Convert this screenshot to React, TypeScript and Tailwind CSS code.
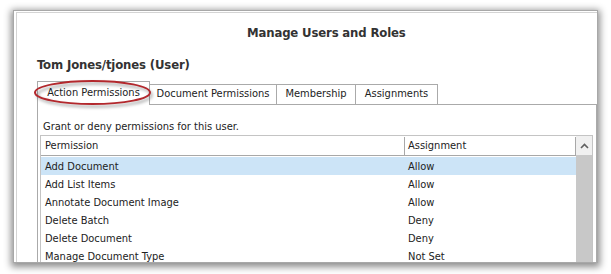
import React from "react";

const rows = [
  ["Add Document", "Allow"],
  ["Add List Items", "Allow"],
  ["Annotate Document Image", "Allow"],
  ["Delete Batch", "Deny"],
  ["Delete Document", "Deny"],
  ["Manage Document Type", "Not Set"],
];

export default function App() {
  return (
    <div className="relative w-[611px] h-[274px] bg-white pt-[10px] pl-[13px] font-['DejaVu_Sans_Condensed','DejaVu_Sans',sans-serif] text-[11px] text-[#222]">
      <div className="w-[585px] h-[253px] border border-[#a8a8a8] bg-white overflow-hidden shadow-[0_2px_7px_2px_rgba(0,0,0,0.45)]">
        <div className="ml-[2px] mt-[1px] h-full border-l border-t border-[#d4d4d4]">
          <div className="pt-[12px] pl-[230px] h-[28px] leading-[16px] text-[13px] font-bold text-[#333] tracking-[-0.15px]">
            Manage Users and Roles
          </div>
          <div className="mt-[16px] pl-[20px] leading-[16px] text-[13px] font-bold text-[#333] tracking-[-0.15px]">
            Tom Jones/tjones (User)
          </div>
          <div className="mt-[8px] pl-[20px]">
            <div className="flex items-end h-[23px]">
              <div className="relative z-10 -mb-px h-[24px] w-[113px] border-l border-r border-t border-[#aaa] bg-white flex items-center justify-center pb-[1px]">
                Action Permissions
              </div>
              <div className="h-[20px] w-[127px] border-r border-t border-[#aaa] bg-white flex items-center justify-center">
                Document Permissions
              </div>
              <div className="h-[20px] w-[79px] border-r border-t border-[#aaa] bg-white flex items-center justify-center">
                Membership
              </div>
              <div className="h-[20px] w-[82px] border-r border-t border-[#aaa] bg-white flex items-center justify-center">
                Assignments
              </div>
            </div>
            <div className="w-[560px] h-[200px] border-l border-r border-t border-[#aaa]">
              <div className="pt-[15px] pl-[5px] leading-[14px]">Grant or deny permissions for this user.</div>
              <div className="mt-[1px] ml-[2px] w-[553px] h-[200px] border-l border-r border-t border-[#c4c4c4] flex">
                <div className="w-[535px]">
                  <div className="flex h-[20px] border-b border-[#a8a8a8] pt-[1px]">
                    <div className="w-[364px] border-r border-[#a8a8a8] pl-[4px] flex items-center">Permission</div>
                    <div className="w-[171px] border-r border-[#a8a8a8] pl-[3px] flex items-center">Assignment</div>
                  </div>
                  <div className="pt-[1px]">
                    {rows.map(([p, a], i) => (
                      <div key={p} className={"flex h-[18px] items-center pt-[2px] " + (i === 0 ? "bg-[#cce4f7]" : "")}>
                        <div className="w-[364px] pl-[4px]">{p}</div>
                        <div className="pl-[3px]">{a}</div>
                      </div>
                    ))}
                  </div>
                </div>
                <div className="w-[16px] flex flex-col">
                  <div className="h-[19px] bg-[#f0f0f0] flex items-center justify-center">
                    <svg width="9" height="6" viewBox="0 0 9 6">
                      <path d="M1 5 L4.5 1.5 L8 5" fill="none" stroke="#606060" strokeWidth="1.6" />
                    </svg>
                  </div>
                  <div className="flex-1 bg-[#c8c8c8]" />
                </div>
              </div>
            </div>
          </div>
        </div>
      </div>
      <svg className="absolute left-0 top-0 z-20 pointer-events-none" width="611" height="274">
        <defs>
          <filter id="sh" x="-20%" y="-50%" width="140%" height="200%">
            <feGaussianBlur stdDeviation="1.5" />
          </filter>
        </defs>
        <ellipse cx="94.5" cy="95" rx="57" ry="11.5" fill="none" stroke="rgba(0,0,0,0.3)" strokeWidth="2.5" filter="url(#sh)" />
        <ellipse cx="92.5" cy="92.5" rx="57.5" ry="11.5" fill="none" stroke="#b3282d" strokeWidth="2" />
      </svg>
    </div>
  );
}
